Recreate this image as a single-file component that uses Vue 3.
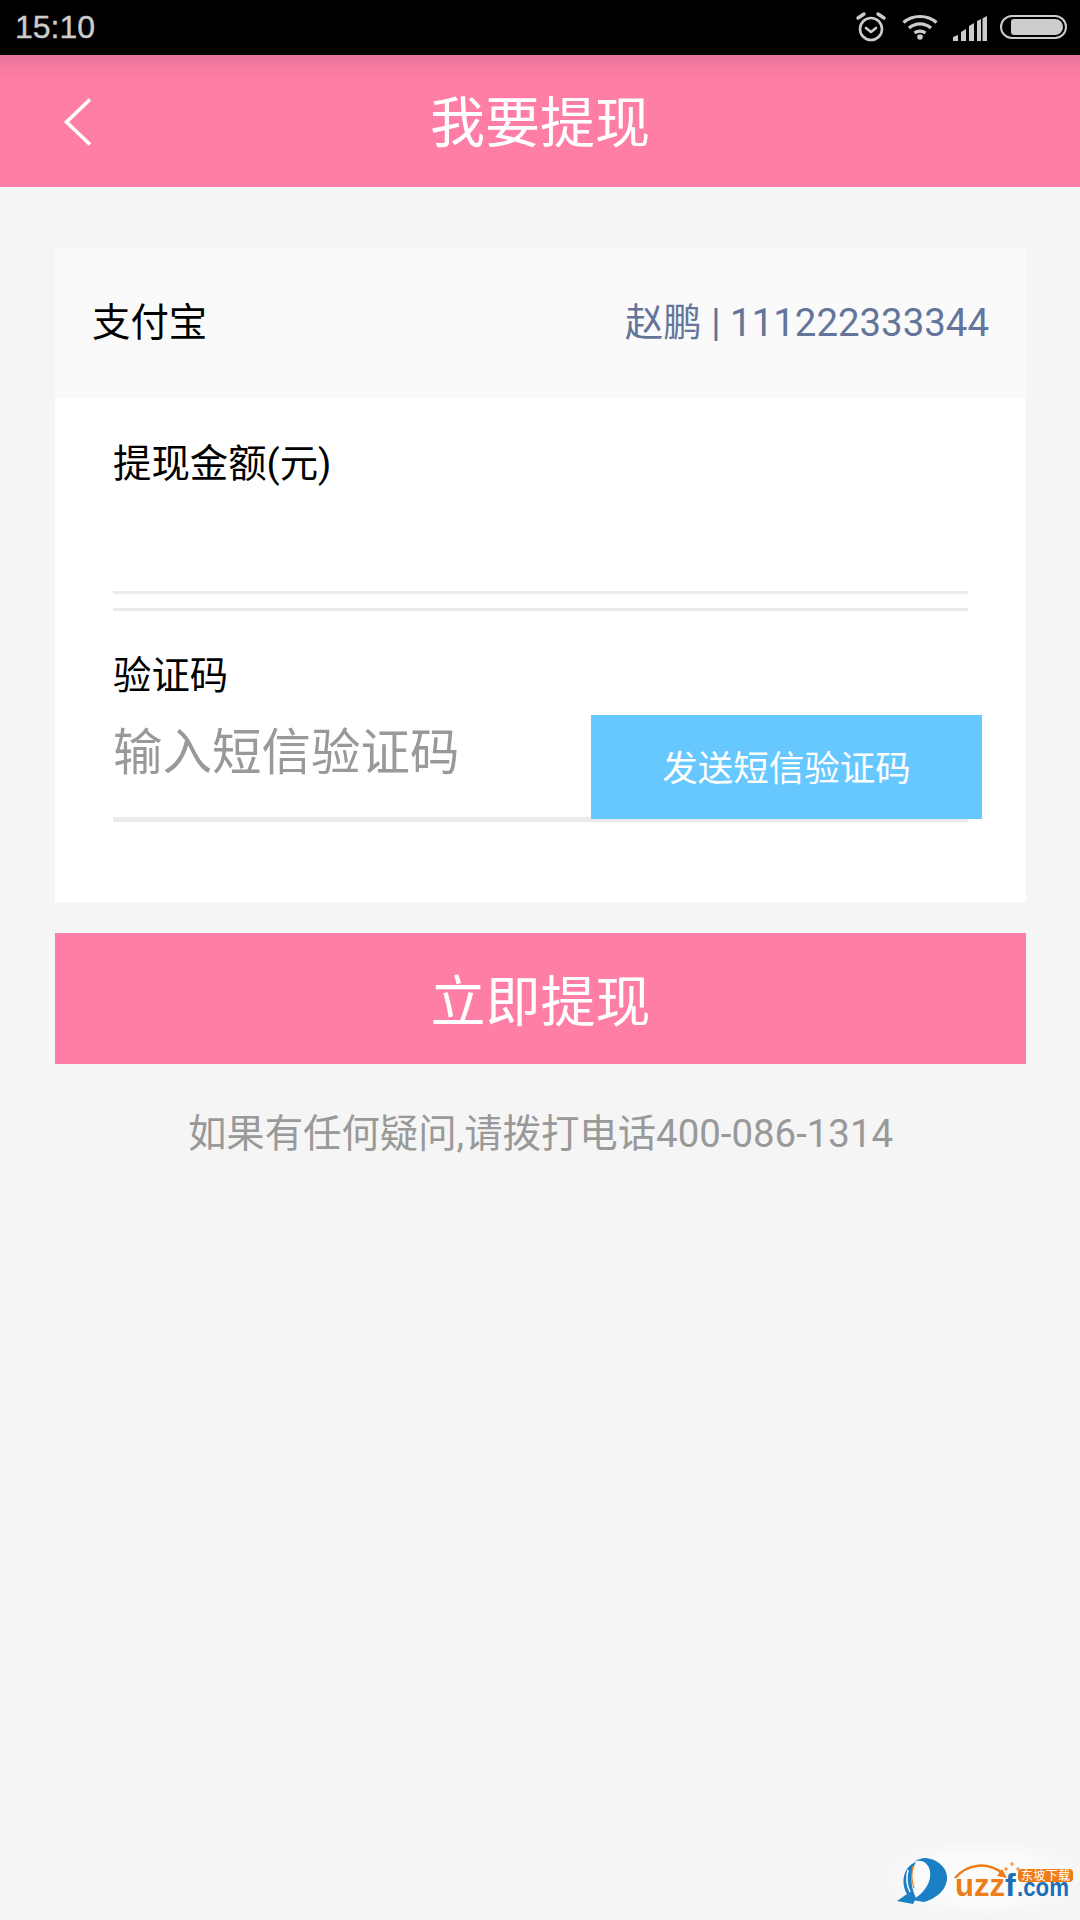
<script setup>
const title = '我要提现'
</script>

<template>
  <div class="page">
    <div class="status">
      <span class="time">15:10</span>
      <div class="status-icons">
        <svg class="ic-alarm" width="32" height="32" viewBox="0 0 32 32" fill="none" stroke="#ccc">
          <circle cx="16" cy="18" r="11" stroke-width="2.6" />
          <path d="M11 17l5 4 5-4" stroke-width="2.6" stroke-linecap="round" stroke-linejoin="round" />
          <path d="M3 7l6-4M29 7l-6-4" stroke-width="3.4" stroke-linecap="round" />
        </svg>
        <svg class="ic-wifi" width="36" height="26" viewBox="0 0 36 26" fill="none" stroke="#ccc" stroke-width="3.2">
          <path d="M1.500 8.500C10.500 .5 25.500 .5 34.500 8.500" />
          <path d="M7 14c6.500-5.500 15.500-5.500 22 0" />
          <path d="M12.500 19c3-2.500 8-2.500 11 0" />
          <circle cx="18" cy="23" r="2.800" fill="#ccc" stroke="none" />
        </svg>
        <svg class="ic-signal" width="35" height="25" viewBox="0 0 35 25" fill="#ccc">
          <path d="M0 21l5-2v6H0zM8 16l5-3v12H8zM16 10l5-3v18h-5zM24 5l10-5v25H24z" />
          <path d="M28 2.500v22.500h1.500V2z" fill="#000" />
        </svg>
        <div class="battery"><div class="battery-fill"></div></div>
      </div>
    </div>

    <header class="header">
      <svg class="back" width="30" height="50" viewBox="0 0 30 50" fill="none" stroke="#fff" stroke-width="3.600">
        <path d="M27 2.500 3.500 25 27 47.500" />
      </svg>
      <h1 class="title">{{ title }}</h1>
    </header>

    <main class="content">
      <section class="card">
        <div class="account">
          <span class="account-name">支付宝</span>
          <span class="account-info">赵鹏 | 111222333344</span>
        </div>
        <div class="form">
          <div class="label amount-label">提现金额(元)</div>
          <div class="amount-input"></div>
          <div class="rule-second"></div>
          <div class="label code-label">验证码</div>
          <div class="code-row">
            <span class="placeholder">输入短信验证码</span>
            <button class="send" type="button">发送短信验证码</button>
          </div>
        </div>
      </section>
      <button class="submit" type="button">立即提现</button>
      <p class="hint">如果有任何疑问,请拨打电话400-086-1314</p>
    </main>

    <svg class="watermark" width="200" height="100" viewBox="0 0 200 100">
      <defs>
        <radialGradient id="wm-glow">
          <stop offset="0.6" stop-color="#fff" stop-opacity="0.6" />
          <stop offset="1" stop-color="#fff" stop-opacity="0" />
        </radialGradient>
      </defs>
      <ellipse cx="104" cy="58" rx="104" ry="40" fill="url(#wm-glow)" />
      <path d="M36 42C24 46 20 62 27 74L17 81 33 84 36 78C30 66 30 52 36 42Z" fill="#1a7fc4" />
      <path d="M34 42C42 38 52 44 50 58 48 68 40 76 32 80L44 82C58 78 68 68 67 56 66 46 56 39 46 38 41 38 37 40 34 42Z" fill="#1a7fc4" />
      <path d="M28 50C26 58 27 66 30 72" stroke="#fff" stroke-width="1.500" fill="none" />
      <path d="M33 46C31 54 32 62 34 68" stroke="#ee7c1a" stroke-width="1.200" fill="none" />
      <path d="M75 58C88 43 108 42 122 53" stroke="#ee7c1a" stroke-width="2.500" fill="none" />
      <path d="M127 58 117 56 122 49Z" fill="#ee7c1a" />
      <path d="M130 44h4M132 42v4M124 49h4M126 47v4M136 49h4M138 47v4" stroke="#ee7c1a" stroke-width="1" />
      <rect x="138" y="49" width="55" height="13" rx="4" fill="#ee7c1a" />
      <text x="141" y="60" class="wm-cn" textLength="49">东坡下载</text>
      <text x="75" y="76" class="wm-u" textLength="50" lengthAdjust="spacingAndGlyphs">uzz</text>
      <text x="125" y="76" class="wm-f">f</text>
      <text x="137" y="76" class="wm-com" textLength="52" lengthAdjust="spacingAndGlyphs">.com</text>
    </svg>
  </div>
</template>

<style>
html, body { margin: 0; padding: 0; }
</style>

<style scoped>
.page {
  position: relative;
  width: 1080px;
  height: 1920px;
  overflow: hidden;
  background: #f5f5f5;
  font-family: "Roboto", "Noto Sans CJK SC", sans-serif;
}

.status {
  height: 55px;
  background: #000;
  display: flex;
  align-items: center;
  justify-content: space-between;
  padding: 0 13px 0 15px;
  box-sizing: border-box;
}
.time {
  font-family: "Liberation Sans", sans-serif;
  font-size: 32px;
  color: #ccc;
  line-height: 55px;
  -webkit-text-stroke: 0.4px #ccc;
}
.status-icons {
  display: flex;
  align-items: center;
  padding-bottom: 1px;
}
.ic-alarm { margin-right: 15px; }
.ic-wifi { margin-right: 15px; }
.ic-signal { margin-right: 12px; margin-top: 2px; }
.battery {
  width: 63px;
  height: 20px;
  border: 2px solid #ccc;
  border-radius: 12px;
  display: flex;
  align-items: center;
  justify-content: flex-end;
}
.battery-fill {
  width: 52px;
  height: 16px;
  margin-right: 2px;
  background: #ccc;
  border-radius: 3px 8px 8px 3px;
}

.header {
  height: 132px;
  position: relative;
  display: flex;
  align-items: center;
  justify-content: center;
  background: linear-gradient(#e8759a 0, #ff7ea6 24px);
}
.back {
  position: absolute;
  left: 63px;
  top: 42px;
}
.title {
  margin: 0;
  padding-top: 4px;
  font-size: 55px;
  font-weight: 400;
  color: #fff;
  line-height: 60px;
}

.content {
  padding: 61px 54px 0 55px;
}
.card {
  background: #fff;
  height: 654px;
}
.account {
  height: 150px;
  box-sizing: border-box;
  padding: 0 37px 8px;
  background: #fafafa;
  display: flex;
  align-items: center;
  justify-content: space-between;
}
.account-name {
  font-size: 38.4px;
  color: #000;
}
.account-info {
  font-size: 38.4px;
  color: #64749a;
}
.form {
  padding: 0 58px;
}
.label {
  font-size: 38.4px;
  color: #000;
  line-height: 50px;
}
.amount-label {
  padding-top: 41px;
}
.amount-input {
  height: 105px;
  border-bottom: 3px solid #ebebeb;
  box-sizing: border-box;
}
.rule-second {
  height: 3px;
  margin-top: 14px;
  background: #ebebeb;
}
.code-label {
  margin-top: 40px;
}
.code-row {
  position: relative;
  height: 116px;
  border-bottom: 5px solid #ebebeb;
}
.placeholder {
  display: block;
  font-size: 49.500px;
  line-height: 66px;
  color: #999;
  padding-top: 19px;
}
.send {
  position: absolute;
  left: 478px;
  top: 14px;
  width: 391px;
  height: 104px;
  margin: 0;
  border: 0;
  padding: 0 0 3px;
  background: #66c8ff;
  color: #fff;
  font: inherit;
  font-size: 35.500px;
}
.submit {
  display: block;
  width: 100%;
  height: 131px;
  margin: 31px 0 0;
  border: 0;
  padding: 0 0 3px;
  background: #ff7ea6;
  color: #fff;
  font: inherit;
  font-size: 55px;
}
.hint {
  margin: 45px 0 0;
  text-align: center;
  font-size: 38.4px;
  line-height: 50px;
  color: #999;
}

.watermark {
  position: absolute;
  right: 0;
  bottom: 0;
}
.wm-u, .wm-f, .wm-com {
  font-family: "Liberation Sans", sans-serif;
  font-weight: 700;
}
.wm-u { font-size: 32px; fill: #ee7c1a; }
.wm-f { font-size: 32px; fill: #1a6fb8; }
.wm-com { font-size: 25px; fill: #1a6fb8; }
.wm-cn {
  font-family: "Noto Sans CJK SC", sans-serif;
  font-size: 12px;
  fill: #fff;
}
</style>
